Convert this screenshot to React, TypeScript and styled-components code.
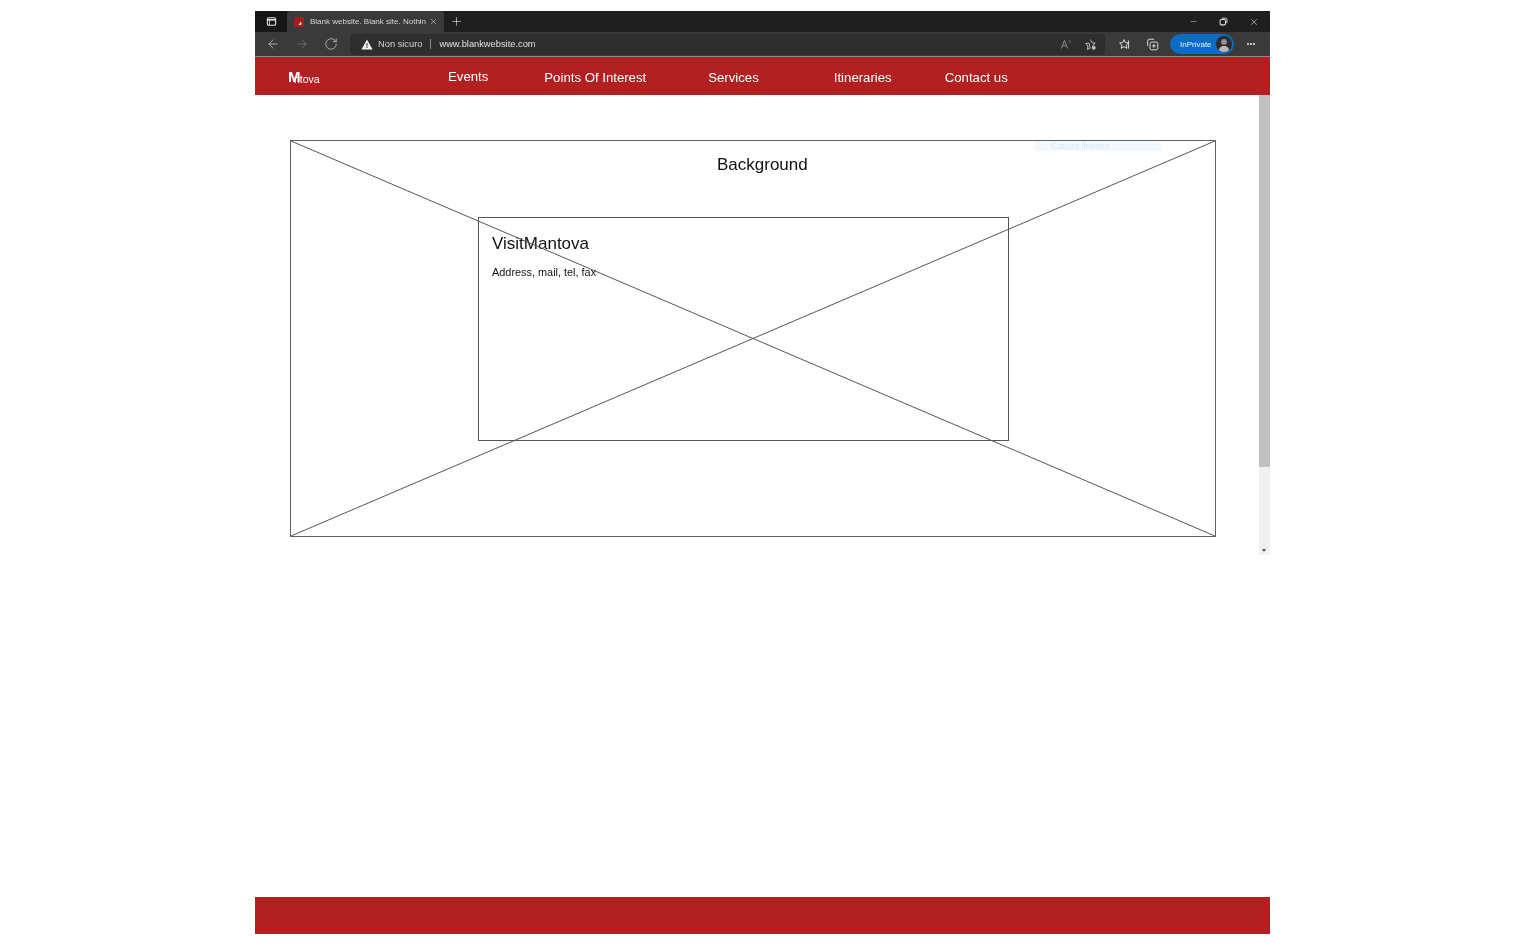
import styled, { createGlobalStyle } from 'styled-components';
import { ArrowLeft, ArrowRight, Minus, Plus, RotateCw, X } from 'lucide-react';

const GlobalStyle = createGlobalStyle`
	html,
	body {
		margin: 0;
		background: #fff;
		font-family: 'Liberation Sans', Arial, sans-serif;
	}
`;

const Page = styled.div`
	box-sizing: border-box;
	width: 1532px;
	height: 945px;
	padding: 11px 262px 11px 255px;
	overflow: hidden;
`;
const Frame = styled.div`
	display: flex;
	flex-direction: column;
	height: 100%;
`;

const TabStrip = styled.div`
	display: flex;
	align-items: stretch;
	height: 21px;
	background: #1f1f1f;
	color: #e4e4e4;
	filter: blur(0.35px);
`;
const TabActions = styled.div`
	display: flex;
	align-items: center;
	justify-content: center;
	width: 32px;
	background: #171717;
`;
const Tab = styled.div`
	display: flex;
	align-items: center;
	box-sizing: border-box;
	width: 157px;
	padding: 0 6px 0 7px;
	background: #3a3a3a;
	border-radius: 4px 4px 0 0;
	font-size: 8px;
	white-space: nowrap;
`;
const TabTitle = styled.span`
	flex: 1;
	margin-left: 6px;
	color: #d6d6d6;
`;
const NewTab = styled.div`
	display: flex;
	align-items: center;
	margin-left: 6px;
`;
const WindowControls = styled.div`
	display: flex;
	align-items: center;
	gap: 21px;
	margin-left: auto;
	padding-right: 11px;
`;

const AddressRow = styled.div`
	display: flex;
	align-items: center;
	box-sizing: border-box;
	height: 25px;
	padding: 0 13px 0 11px;
	background: #3a3a3a;
	border-bottom: 1px solid #8a8a8a;
	color: #d8d8d8;
	filter: blur(0.35px);
`;
const NavButtons = styled.div`
	display: flex;
	align-items: center;
	gap: 15px;
`;
const UrlBar = styled.div`
	display: flex;
	align-items: center;
	box-sizing: border-box;
	width: 755px;
	height: 21px;
	margin-left: 12px;
	padding: 0 8px 0 11px;
	background: #2e2e2e;
	border-radius: 4px;
	font-size: 9.3px;
`;
const Insecure = styled.span`
	margin-left: 5px;
	color: #d2d2d2;
`;
const UrlDivider = styled.span`
	width: 1px;
	height: 10px;
	margin: 0 8px;
	background: #8b8b8b;
`;
const Url = styled.span`
	color: #e0e0e0;
`;
const UrlTools = styled.div`
	display: flex;
	align-items: center;
	gap: 11px;
	margin-left: auto;
`;
const RowTools = styled.div`
	display: flex;
	align-items: center;
	gap: 15px;
	margin-left: 13px;
`;
const ProfilePill = styled.div`
	display: flex;
	align-items: center;
	justify-content: space-between;
	box-sizing: border-box;
	width: 64px;
	height: 20px;
	margin-left: 11px;
	padding: 0 2px 0 10px;
	border-radius: 10px;
	background: #0a6cc4;
	color: #e8f3fd;
	font-size: 8px;
`;
const Avatar = styled.span`
	display: flex;
	width: 16px;
	height: 16px;
	overflow: hidden;
	border-radius: 50%;
`;
const More = styled.div`
	display: flex;
	gap: 1.5px;
	margin-left: 13px;
`;
const MoreDot = styled.span`
	width: 1.6px;
	height: 1.6px;
	border-radius: 50%;
	background: #e0e0e0;
`;

const NavBar = styled.nav`
	display: flex;
	align-items: center;
	flex: none;
	box-sizing: border-box;
	height: 38px;
	padding-top: 2px;
	background: #b12121;
	color: #fff;
	filter: blur(0.3px);
`;
const Logo = styled.div`
	position: relative;
	top: 2px;
	box-sizing: border-box;
	width: 160px;
	padding-left: 33px;
	font-size: 10.5px;
`;
const LogoInitial = styled.span`
	position: absolute;
	left: 33px;
	top: -5px;
	font-size: 15px;
	font-weight: 700;
`;
const LogoRest = styled.span`
	margin-left: 6px;
`;
const NavItem = styled.a<{ $gap: number; $drop?: number }>`
	margin-left: ${(p) => p.$gap}px;
	margin-top: ${(p) => p.$drop ?? 0}px;
	font-size: 13.2px;
	white-space: nowrap;
`;

const Viewport = styled.div`
	display: flex;
	flex: none;
	height: 460px;
`;
const Content = styled.main`
	flex: 1;
	padding: 45px 43px 0 35px;
`;
const Scrollbar = styled.div`
	position: relative;
	flex: none;
	width: 11px;
	background: #f1f1f1;
`;
const ScrollThumb = styled.div`
	height: 372px;
	background: #c1c1c1;
`;
const ScrollArrow = styled.span`
	position: absolute;
	left: 3px;
	bottom: 3px;
	border-left: 2.5px solid transparent;
	border-right: 2.5px solid transparent;
	border-top: 3px solid #505050;
`;

const Placeholder = styled.section`
	position: relative;
	box-sizing: border-box;
	height: 397px;
	padding: 15px 206px 0 187px;
	border: 1px solid #606060;
	color: #111;
	filter: blur(0.25px);
`;
const CrossLines = styled.svg`
	position: absolute;
	inset: 0;
	width: 100%;
	height: 100%;
`;
const BackgroundLabel = styled.h2`
	margin: 0 0 43px;
	padding-left: 239px;
	font-size: 17px;
	line-height: 18px;
	font-weight: 400;
	white-space: nowrap;
`;
const InfoBox = styled.div`
	box-sizing: border-box;
	height: 224px;
	padding: 16px 13px;
	border: 1px solid #555;
`;
const InfoTitle = styled.h1`
	margin: 0 0 11px;
	font-size: 17px;
	line-height: 20px;
	font-weight: 400;
`;
const InfoText = styled.p`
	margin: 0;
	font-size: 10.9px;
	line-height: 14px;
`;
const CaptureHint = styled.div`
	position: absolute;
	top: 0;
	left: 743px;
	display: flex;
	align-items: center;
	box-sizing: border-box;
	width: 127px;
	height: 10px;
	padding-left: 17px;
	background: #f3faff;
	color: #d9e6f0;
	font-size: 8.5px;
	filter: blur(0.4px);
`;

const Footer = styled.footer`
	flex: none;
	height: 37px;
	margin-top: auto;
	background: #b12121;
`;

function Glyph({ size = 12, children }: { size?: number; children: React.ReactNode }) {
	return (
		<svg
			width={size}
			height={size}
			viewBox="0 0 16 16"
			fill="none"
			stroke="currentColor"
			strokeWidth="1.2"
		>
			{children}
		</svg>
	);
}

export default function App() {
	return (
		<Page>
			<GlobalStyle />
			<Frame>
				<TabStrip>
					<TabActions>
						<Glyph size={11}>
							<rect x="2" y="2.5" width="12" height="11" rx="2" strokeWidth="1.6" />
							<path d="M2 5.5h12" strokeWidth="2.4" />
							<path d="M5 5.5v8" />
						</Glyph>
					</TabActions>
					<Tab>
						<svg width="10" height="10" viewBox="0 0 10 10">
							<rect width="10" height="10" rx="1" fill="#a51c1c" />
							<path d="M4.5 8 7 4.5 7.5 7.5z" fill="#fff" />
						</svg>
						<TabTitle>Blank website. Blank site. Nothin</TabTitle>
						<X size={9} strokeWidth={1.6} color="#cfcfcf" />
					</Tab>
					<NewTab>
						<Plus size={13} strokeWidth={1.2} />
					</NewTab>
					<WindowControls>
						<Minus size={9} strokeWidth={1.2} />
						<Glyph size={9}>
							<rect x="2" y="4.5" width="9.5" height="9.5" rx="2" strokeWidth="1.8" />
							<path d="M5 2h7a2 2 0 0 1 2 2v7" strokeWidth="1.6" />
						</Glyph>
						<X size={10} strokeWidth={1.4} />
					</WindowControls>
				</TabStrip>

				<AddressRow>
					<NavButtons>
						<ArrowLeft size={14} strokeWidth={1.3} color="#c8c8c8" />
						<ArrowRight size={14} strokeWidth={1.3} color="#7b7b7b" />
						<RotateCw size={14} strokeWidth={1.3} color="#c8c8c8" />
					</NavButtons>
					<UrlBar>
						<svg width="12" height="11" viewBox="0 0 12 11">
							<path d="M6 .5 11.6 10.5H.4z" fill="#f2f2f2" />
							<path d="M5.5 4h1v3.4h-1zM5.5 8h1v1h-1z" fill="#2e2e2e" />
						</svg>
						<Insecure>Non sicuro</Insecure>
						<UrlDivider />
						<Url>www.blankwebsite.com</Url>
						<UrlTools>
							<Glyph size={13}>
								<path d="M1.500 13 5.500 3l4 10M3 9.500h5" stroke="#8c8c8c" />
								<path d="M11 3c1 .6 1.600 1.500 1.600 2.800" stroke="#8c8c8c" />
							</Glyph>
							<Glyph size={13}>
								<path d="M8 2l1.800 3.700 4 .6-2.900 2.800.3 1.900M7.500 12.500l-3.300 1.500.7-4.200L2 7l4.100-.9z" stroke="#bdbdbd" />
								<circle cx="12" cy="12" r="2.400" fill="#bdbdbd" stroke="none" />
							</Glyph>
						</UrlTools>
					</UrlBar>
					<RowTools>
						<Glyph size={13}>
							<path d="M7.500 2 9.200 5.600l3.900.5-2.900 2.700.8 3.900-3.500-2-3.500 2 .8-3.900L2 6.100l3.900-.5z" stroke="#dcdcdc" />
							<path d="M13 3v10" stroke="#dcdcdc" />
						</Glyph>
						<Glyph size={13}>
							<rect x="5" y="5" width="9.500" height="9.500" rx="2" stroke="#dcdcdc" />
							<path d="M2 10V4a2.500 2.500 0 0 1 2.500-2.500H10M9.700 7.500v4.500M7.500 9.700H12" stroke="#dcdcdc" />
						</Glyph>
					</RowTools>
					<ProfilePill>
						InPrivate
						<Avatar>
							<svg width="16" height="16" viewBox="0 0 16 16">
								<rect width="16" height="16" fill="#2b2b2b" />
								<circle cx="8" cy="6" r="3" fill="#8f8f8f" />
								<path d="M2.500 16c.5-4.500 2.500-6 5.500-6s5 1.500 5.500 6z" fill="#b9b9b9" />
							</svg>
						</Avatar>
					</ProfilePill>
					<More>
						<MoreDot />
						<MoreDot />
						<MoreDot />
					</More>
				</AddressRow>

				<NavBar>
					<Logo>
						<LogoInitial>M</LogoInitial>
						<LogoRest>ntova</LogoRest>
					</Logo>
					<NavItem $gap={33} $drop={-1}>Events</NavItem>
					<NavItem $gap={56} $drop={1}>Points Of Interest</NavItem>
					<NavItem $gap={62}>Services</NavItem>
					<NavItem $gap={75}>Itineraries</NavItem>
					<NavItem $gap={53} $drop={1}>Contact us</NavItem>
				</NavBar>

				<Viewport>
					<Content>
						<Placeholder>
							<CrossLines preserveAspectRatio="none" viewBox="0 0 100 100">
								<line x1="0" y1="0" x2="100" y2="100" stroke="#555" strokeWidth="1" vectorEffect="non-scaling-stroke" />
								<line x1="100" y1="0" x2="0" y2="100" stroke="#555" strokeWidth="1" vectorEffect="non-scaling-stroke" />
							</CrossLines>
							<CaptureHint>Cattura finestra</CaptureHint>
							<BackgroundLabel>Background</BackgroundLabel>
							<InfoBox>
								<InfoTitle>VisitMantova</InfoTitle>
								<InfoText>Address, mail, tel, fax</InfoText>
							</InfoBox>
						</Placeholder>
					</Content>
					<Scrollbar>
						<ScrollThumb />
						<ScrollArrow />
					</Scrollbar>
				</Viewport>

				<Footer />
			</Frame>
		</Page>
	);
}
